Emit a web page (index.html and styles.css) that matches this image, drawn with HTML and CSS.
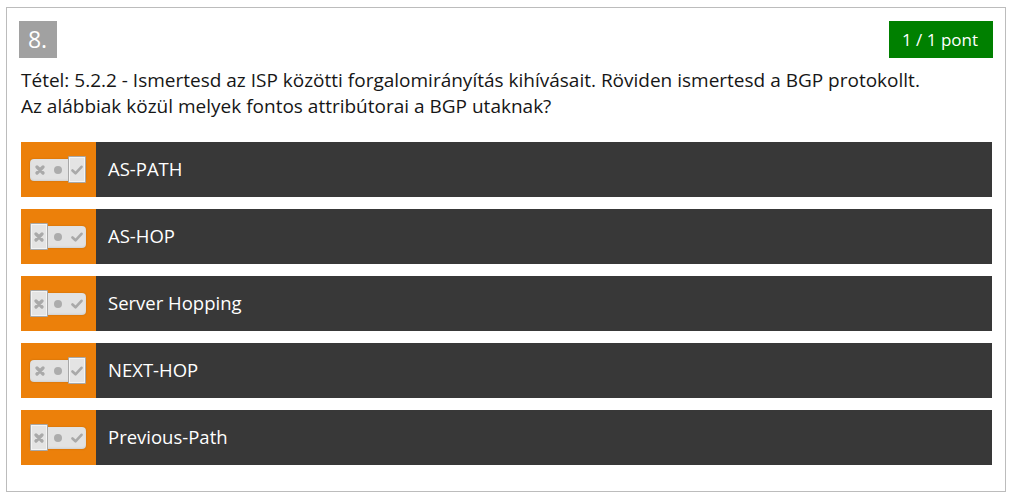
FILE: index.html
```html
<!DOCTYPE html>
<html lang="hu">
<head>
<meta charset="utf-8">
<link rel="stylesheet" href="styles.css">
</head>
<body>
<div class="card">
  <div class="header">
    <div class="num">8.</div>
    <div class="score">1 / 1 pont</div>
  </div>
  <div class="question">Tétel: 5.2.2 - Ismertesd az ISP közötti forgalomirányítás kihívásait. Röviden ismertesd a BGP protokollt.<br>Az alábbiak közül melyek fontos attribútorai a BGP utaknak?</div>
  <div class="answers">
    <div class="row">
      <div class="cell"><div class="toggle sel-yes"><span class="seg no"><svg viewBox="0 0 10 10" width="10" height="10"><path d="M2 2L8 8M8 2L2 8" stroke="#a9a9a9" stroke-width="3.2" stroke-linecap="round"/></svg></span><span class="seg mid"><i class="dot"></i></span><span class="seg yes"><svg viewBox="0 0 12 10" width="12" height="10"><path d="M1.5 5.5L4.5 8.3L10.5 1.8" fill="none" stroke="#a9a9a9" stroke-width="2.6" stroke-linecap="round" stroke-linejoin="round"/></svg></span></div></div>
      <div class="label">AS-PATH</div>
    </div>
    <div class="row">
      <div class="cell"><div class="toggle sel-no"><span class="seg no"><svg viewBox="0 0 10 10" width="10" height="10"><path d="M2 2L8 8M8 2L2 8" stroke="#a9a9a9" stroke-width="3.2" stroke-linecap="round"/></svg></span><span class="seg mid"><i class="dot"></i></span><span class="seg yes"><svg viewBox="0 0 12 10" width="12" height="10"><path d="M1.5 5.5L4.5 8.3L10.5 1.8" fill="none" stroke="#a9a9a9" stroke-width="2.6" stroke-linecap="round" stroke-linejoin="round"/></svg></span></div></div>
      <div class="label">AS-HOP</div>
    </div>
    <div class="row">
      <div class="cell"><div class="toggle sel-no"><span class="seg no"><svg viewBox="0 0 10 10" width="10" height="10"><path d="M2 2L8 8M8 2L2 8" stroke="#a9a9a9" stroke-width="3.2" stroke-linecap="round"/></svg></span><span class="seg mid"><i class="dot"></i></span><span class="seg yes"><svg viewBox="0 0 12 10" width="12" height="10"><path d="M1.5 5.5L4.5 8.3L10.5 1.8" fill="none" stroke="#a9a9a9" stroke-width="2.6" stroke-linecap="round" stroke-linejoin="round"/></svg></span></div></div>
      <div class="label">Server Hopping</div>
    </div>
    <div class="row">
      <div class="cell"><div class="toggle sel-yes"><span class="seg no"><svg viewBox="0 0 10 10" width="10" height="10"><path d="M2 2L8 8M8 2L2 8" stroke="#a9a9a9" stroke-width="3.2" stroke-linecap="round"/></svg></span><span class="seg mid"><i class="dot"></i></span><span class="seg yes"><svg viewBox="0 0 12 10" width="12" height="10"><path d="M1.5 5.5L4.5 8.3L10.5 1.8" fill="none" stroke="#a9a9a9" stroke-width="2.6" stroke-linecap="round" stroke-linejoin="round"/></svg></span></div></div>
      <div class="label">NEXT-HOP</div>
    </div>
    <div class="row">
      <div class="cell"><div class="toggle sel-no"><span class="seg no"><svg viewBox="0 0 10 10" width="10" height="10"><path d="M2 2L8 8M8 2L2 8" stroke="#a9a9a9" stroke-width="3.2" stroke-linecap="round"/></svg></span><span class="seg mid"><i class="dot"></i></span><span class="seg yes"><svg viewBox="0 0 12 10" width="12" height="10"><path d="M1.5 5.5L4.5 8.3L10.5 1.8" fill="none" stroke="#a9a9a9" stroke-width="2.6" stroke-linecap="round" stroke-linejoin="round"/></svg></span></div></div>
      <div class="label">Previous-Path</div>
    </div>
  </div>
</div>
</body>
</html>
```
FILE: styles.css
```css
html, body {
  margin: 0;
  padding: 0;
  background: #ffffff;
}
body {
  font-family: "Open Sans", "Liberation Sans", sans-serif;
  color: #000;
}
.card {
  box-sizing: border-box;
  width: 1000px;
  height: 485px;
  margin: 7px 0 0 6px;
  border: 1px solid #bcbcbc;
  padding: 13px 12px 0 12px;
}
.header {
  display: flex;
  justify-content: space-between;
  align-items: flex-start;
  height: 37px;
}
.num {
  width: 38px;
  height: 37px;
  background: #a1a1a1;
  color: #fff;
  font-size: 23px;
  line-height: 37px;
  text-align: center;
  box-sizing: border-box;
  padding-right: 1px;
}
.score {
  width: 104px;
  height: 37px;
  background: #008000;
  color: #fff;
  font-size: 17px;
  line-height: 37px;
  text-align: center;
  box-sizing: border-box;
  padding-right: 2px;
}
.question {
  margin: 9px 0 0 2px;
  font-size: 19px;
  line-height: 26px;
  color: #161616;
}
.answers {
  margin: 23px 1px 0 2px;
  display: flex;
  flex-direction: column;
  gap: 12px;
}
.row {
  display: flex;
  height: 55px;
  background: #383838;
}
.cell {
  width: 75px;
  flex: none;
  background: #ec800a;
  display: flex;
  align-items: center;
  padding-left: 9px;
  box-sizing: border-box;
}
.toggle {
  display: flex;
  align-items: center;
  width: 56px;
  height: 22px;
  border-radius: 4px;
  background: #e2e2e2;
  box-shadow: 0 0 2px rgba(120, 70, 0, 0.35), inset 0 -1px 2px rgba(0,0,0,0.08);
}
.seg {
  display: flex;
  align-items: center;
  justify-content: center;
  height: 22px;
  box-sizing: border-box;
}
.seg.no { width: 19px; }
.seg.mid { width: 18px; }
.seg.yes { width: 19px; }
.dot {
  display: block;
  width: 8px;
  height: 8px;
  border-radius: 50%;
  background: #acacac;
}
.sel-yes .seg.yes,
.sel-no .seg.no {
  height: 27px;
  border: 1px solid #a8a8a8;
  box-shadow: inset 0 0 0 1px #f4f4f4;
  background: #e4e4e4;
  border-radius: 1px;
}
.sel-no .seg.no { width: 18px; margin-right: 1px; }
.sel-yes .seg.yes { width: 18px; margin-left: 1px; }
.label {
  display: flex;
  align-items: center;
  padding: 0 0 2px 12px;
  color: #fff;
  font-size: 18.5px;
}
```
